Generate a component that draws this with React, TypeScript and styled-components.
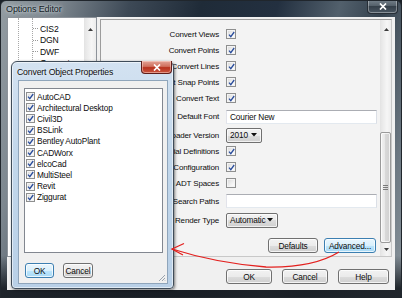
import React from "react";
import styled, { createGlobalStyle } from "styled-components";

const GlobalStyle = createGlobalStyle`
  html, body { margin: 0; padding: 0; background: #1b2128; }
  body { width: 402px; height: 298px; overflow: hidden; }
  * { box-sizing: border-box; }
`;

const Window = styled.div`
  position: relative;
  width: 402px;
  height: 298px;
  display: flex;
  flex-direction: column;
  border: 1px solid #20262c;
  border-radius: 6px 6px 0 0;
  background:
    linear-gradient(180deg, rgba(0,0,0,0) 0%, rgba(0,0,0,0) 86%, rgba(24,29,35,0.92) 97%),
    linear-gradient(105deg, #939ca2 0%, #7d878f 12%, #3d4956 27%, #1f2b38 42%, #233040 58%, #52606c 71%, #34414d 80%, #6e7a84 92%, #8b959c 100%);
  overflow: hidden;
  font-family: "Liberation Sans", Arial, sans-serif;
  font-size: 8px;
  letter-spacing: -0.15px;
  color: #0c0c0c;
`;

const TitleBar = styled.div`
  height: 16px;
  display: flex;
  justify-content: space-between;
  align-items: flex-start;
`;

const Title = styled.div`
  padding: 3px 0 0 5px;
  font-size: 9px;
  line-height: 10px;
  letter-spacing: -0.1px;
  color: #131c25;
  text-shadow: 0 0 3px rgba(225, 232, 238, 0.95), 0 0 6px rgba(225, 232, 238, 0.7);
`;

const WinClose = styled.div`
  width: 31px;
  height: 14px;
  margin: -1px 3px 0 0;
  border: 1px solid #262e36;
  border-top: none;
  border-radius: 0 0 4px 4px;
  background: linear-gradient(180deg, #75818b 0%, #505c66 50%, #35404a 50%, #4a5661 100%);
  box-shadow: inset 0 0 0 1px rgba(255, 255, 255, 0.35);
  display: flex;
  align-items: center;
  justify-content: center;
`;

const Client = styled.div`
  flex: 1;
  margin: 0 6px 7px 6px;
  background: #f0f0f0;
  display: flex;
  flex-direction: column;
`;

const TopRow = styled.div`
  display: flex;
  gap: 3px;
  height: 240px;
`;

const TreeBox = styled.div`
  width: 90px;
  height: 240px;
  background: #fff;
  border: 1px solid #8d939a;
  display: flex;
`;

const TreeContent = styled.div`
  flex: 1;
  padding-left: 10px;
`;

const OuterGuide = styled.div`
  height: 100%;
  border-left: 1px dotted #a8a8a8;
  padding-left: 13px;
`;

const InnerGuide = styled.div`
  height: 100%;
  border-left: 1px dotted #a8a8a8;
  padding-top: 5px;
`;

const TreeItem = styled.div`
  height: 11.5px;
  display: flex;
  align-items: center;
  font-size: 8.6px;
  &::before {
    content: "";
    width: 5px;
    margin-right: 2px;
    border-top: 1px dotted #999;
  }
`;

const VScroll = styled.div<{ $w: number }>`
  width: ${(p) => p.$w}px;
  display: flex;
  flex-direction: column;
  background: linear-gradient(90deg, #e6e6e6, #f6f6f6 60%, #ececec);
  border-left: 1px solid #e4e4e4;
`;

const ArrowBox = styled.div<{ $h: number }>`
  height: ${(p) => p.$h}px;
  flex: none;
  display: flex;
  align-items: center;
  justify-content: center;
`;

const Spacer = styled.div<{ $h: number }>`
  height: ${(p) => p.$h}px;
  flex: none;
`;

const Thumb = styled.div<{ $h: number }>`
  height: ${(p) => p.$h}px;
  flex: none;
  margin: 0 0 0 -1px;
  border: 1px solid #9a9a9a;
  border-radius: 2px;
  background: linear-gradient(90deg, #f2f2f2, #e6e6e6 50%, #d8d8d8 50%, #d0d0d0);
  box-shadow: inset 0 0 0 1px rgba(255, 255, 255, 0.7);
  display: flex;
  align-items: center;
  justify-content: center;
`;

const RightPanel = styled.div`
  margin-top: 2px;
  width: 292px;
  height: 238px;
  border: 1px solid #9c9c9c;
  border-right-color: #c8c8c8;
  border-bottom-color: #c8c8c8;
  background: #f3f3f3;
  display: flex;
`;

const FormArea = styled.div`
  flex: 1;
  display: flex;
  flex-direction: column;
  padding: 6px 3px 3px 0;
`;

const FormGrid = styled.div`
  display: grid;
  grid-template-columns: 118px 151px;
  grid-template-rows: 16px 16px 16px 16px 16px 21px 16px 16px 16px 16px 20px 18px;
  column-gap: 7px;
  align-items: center;
`;

const Label = styled.div`
  display: flex;
  justify-content: flex-end;
  white-space: nowrap;
  font-size: 8px;
`;

const Cell = styled.div`
  display: flex;
  align-items: center;
`;

const CheckBox = styled.div<{ $size: number }>`
  width: ${(p) => p.$size}px;
  height: ${(p) => p.$size}px;
  border: 1px solid #8e8f8f;
  background: linear-gradient(135deg, #d8d8d8, #f6f6f6 70%, #ffffff);
  box-shadow: inset 0 0 0 1px #f4f4f4;
  display: flex;
  align-items: center;
  justify-content: center;
  flex: none;
`;

const TextInput = styled.div`
  width: 151px;
  height: 14px;
  border: 1px solid;
  border-color: #abadb3 #dbdfe6 #e3e9ef #e2e3ea;
  background: #fff;
  padding-left: 3px;
  display: flex;
  align-items: center;
  font-size: 8.3px;
`;

const SelectBox = styled.div<{ $w: number }>`
  width: ${(p) => p.$w}px;
  height: 15px;
  border: 1px solid #707070;
  border-radius: 2px;
  background: linear-gradient(180deg, #f2f2f2 0%, #ebebeb 50%, #dddddd 50%, #cfcfcf 100%);
  box-shadow: inset 0 0 0 1px rgba(255, 255, 255, 0.7);
  display: flex;
  align-items: center;
  justify-content: space-between;
  padding: 0 4px 0 3px;
  font-size: 8.3px;
`;

const PanelButtons = styled.div`
  margin-top: auto;
  display: flex;
  justify-content: flex-end;
  gap: 6px;
  padding-right: 1px;
`;

const Button = styled.div<{ $w: number; $def?: boolean }>`
  width: ${(p) => p.$w}px;
  height: 15px;
  border: 1px solid ${(p) => (p.$def ? "#3c7fb1" : "#707070")};
  border-radius: 3px;
  background: ${(p) =>
    p.$def
      ? "linear-gradient(180deg, #eaf6fd 0%, #d9f0fc 50%, #bee6fd 50%, #a7d9f5 100%)"
      : "linear-gradient(180deg, #f2f2f2 0%, #ebebeb 50%, #dddddd 50%, #cfcfcf 100%)"};
  box-shadow: inset 0 0 0 1px rgba(255, 255, 255, 0.75);
  display: flex;
  align-items: center;
  justify-content: center;
  font-size: 8.3px;
  flex: none;
`;

const BottomRow = styled.div`
  display: flex;
  justify-content: flex-end;
  gap: 10px;
  padding-right: 6px;
  margin-top: 12px;
`;

const Dialog = styled.div`
  position: absolute;
  left: 10px;
  top: 60px;
  width: 163px;
  height: 228px;
  border: 1px solid #3f4c59;
  border-radius: 6px 6px 4px 4px;
  background: linear-gradient(180deg, #d3e2f1 0%, #c2d7eb 40%, #b9d0e7 100%);
  box-shadow: 1px 1px 3px rgba(0, 0, 0, 0.5), inset 0 0 0 1px rgba(255, 255, 255, 0.55);
  display: flex;
  flex-direction: column;
`;

const DialogTitleBar = styled.div`
  height: 18px;
  display: flex;
  justify-content: space-between;
  align-items: flex-start;
  flex: none;
`;

const DialogTitle = styled.div`
  padding: 5px 0 0 5px;
  line-height: 10px;
  font-size: 8.7px;
  color: #0c0c0c;
  text-shadow: 0 0 3px rgba(255, 255, 255, 0.8);
`;

const DialogClose = styled.div`
  width: 31px;
  height: 13px;
  margin: -1px 1px 0 0;
  border: 1px solid #5e1d1a;
  border-top: none;
  border-radius: 0 0 4px 4px;
  background: linear-gradient(180deg, #e3a497 0%, #d0705e 45%, #b8331f 55%, #c9553f 100%);
  box-shadow: inset 0 0 0 1px rgba(255, 220, 210, 0.5);
  display: flex;
  align-items: center;
  justify-content: center;
`;

const DialogClient = styled.div`
  position: relative;
  flex: 1;
  margin: 0 5px 4px 6px;
  border: 1px solid #8fa5bb;
  background: #f0f0f0;
  padding: 7px 4px 0 5px;
  display: flex;
  flex-direction: column;
`;

const ListBox = styled.div`
  width: 139px;
  height: 165px;
  border: 1px solid #828790;
  background: #fff;
  padding: 2px 0 0 1px;
  flex: none;
`;

const ListItem = styled.div`
  height: 11.2px;
  display: flex;
  align-items: center;
  gap: 2px;
  font-size: 8.3px;
`;

const DialogButtons = styled.div`
  display: flex;
  gap: 9px;
  margin-top: 10px;
  padding-left: 1px;
`;

const Grip = styled.svg`
  position: absolute;
  right: 1px;
  bottom: 1px;
`;

const Overlay = styled.svg`
  position: absolute;
  left: 0;
  top: 0;
  pointer-events: none;
`;

const Tick = () => (
  <svg width="7" height="7" viewBox="0 0 7 7">
    <path d="M1 3.6 L2.8 5.6 L6.2 1" fill="none" stroke="#2a4d9c" strokeWidth="1.3" />
  </svg>
);

const Check = ({ checked, size }: { checked: boolean; size: number }) => (
  <CheckBox $size={size}>{checked && <Tick />}</CheckBox>
);

const Caret = () => (
  <svg width="6" height="4" viewBox="0 0 6 4">
    <path d="M0 0 H6 L3 3.5 Z" fill="#111" />
  </svg>
);

const ScrollArrow = ({ up }: { up: boolean }) => (
  <svg width="5" height="3" viewBox="0 0 5 3">
    <path d={up ? "M0 3 L2.5 0 L5 3 Z" : "M0 0 L5 0 L2.5 3 Z"} fill="#3c3c3c" />
  </svg>
);

const XMark = ({ w }: { w: number }) => (
  <svg width={w} height={w - 1} viewBox="0 0 8 7">
    <path d="M1 0.5 L7 6.5 M7 0.5 L1 6.5" stroke="#fff" strokeWidth="1.7" />
  </svg>
);

type Row =
  | { kind: "check"; label: string; checked: boolean }
  | { kind: "input"; label: string; value: string }
  | { kind: "select"; label: string; value: string; w: number };

const rows: Row[] = [
  { kind: "check", label: "Convert Views", checked: true },
  { kind: "check", label: "Convert Points", checked: true },
  { kind: "check", label: "Convert Lines", checked: true },
  { kind: "check", label: "Insert Snap Points", checked: true },
  { kind: "check", label: "Convert Text", checked: true },
  { kind: "input", label: "Default Font", value: "Courier New" },
  { kind: "select", label: "Loader Version", value: "2010", w: 36 },
  { kind: "check", label: "Use Material Definitions", checked: true },
  { kind: "check", label: "Load Configuration", checked: true },
  { kind: "check", label: "Skip Objects in ADT Spaces", checked: false },
  { kind: "input", label: "Reference Search Paths", value: "" },
  { kind: "select", label: "Render Type", value: "Automatic", w: 52 },
];

const products = [
  "AutoCAD",
  "Architectural Desktop",
  "Civil3D",
  "BSLink",
  "Bentley AutoPlant",
  "CADWorx",
  "elcoCad",
  "MultiSteel",
  "Revit",
  "Ziggurat",
];

export default function App() {
  return (
    <>
      <GlobalStyle />
      <Window>
        <TitleBar>
          <Title>Options Editor</Title>
          <WinClose>
            <XMark w={8} />
          </WinClose>
        </TitleBar>
        <Client>
          <TopRow>
            <TreeBox>
              <TreeContent>
                <OuterGuide>
                  <InnerGuide>
                    <TreeItem>CIS2</TreeItem>
                    <TreeItem>DGN</TreeItem>
                    <TreeItem>DWF</TreeItem>
                    <TreeItem>Geometry</TreeItem>
                  </InnerGuide>
                </OuterGuide>
              </TreeContent>
              <VScroll $w={12}>
                <ArrowBox $h={22}>
                  <ScrollArrow up />
                </ArrowBox>
              </VScroll>
            </TreeBox>
            <RightPanel>
              <FormArea>
                <FormGrid>
                  {rows.map((r) => (
                    <React.Fragment key={r.label}>
                      <Label>{r.label}</Label>
                      <Cell>
                        {r.kind === "check" && <Check checked={r.checked} size={10} />}
                        {r.kind === "input" && <TextInput>{r.value}</TextInput>}
                        {r.kind === "select" && (
                          <SelectBox $w={r.w}>
                            <span>{r.value}</span>
                            <Caret />
                          </SelectBox>
                        )}
                      </Cell>
                    </React.Fragment>
                  ))}
                </FormGrid>
                <PanelButtons>
                  <Button $w={50}>Defaults</Button>
                  <Button $w={52} $def>
                    Advanced...
                  </Button>
                </PanelButtons>
              </FormArea>
              <VScroll $w={11}>
                <ArrowBox $h={18}>
                  <ScrollArrow up />
                </ArrowBox>
                <Spacer $h={94} />
                <Thumb $h={111}>
                  <svg width="5" height="5" viewBox="0 0 5 5">
                    <path d="M0 0.5 H5 M0 2.5 H5 M0 4.5 H5" stroke="#6e6e6e" strokeWidth="0.9" />
                  </svg>
                </Thumb>
                <ArrowBox $h={13}>
                  <ScrollArrow up={false} />
                </ArrowBox>
              </VScroll>
            </RightPanel>
          </TopRow>
          <BottomRow>
            <Button $w={46}>OK</Button>
            <Button $w={46}>Cancel</Button>
            <Button $w={51}>Help</Button>
          </BottomRow>
        </Client>

        <Dialog>
          <DialogTitleBar>
            <DialogTitle>Convert Object Properties</DialogTitle>
            <DialogClose>
              <XMark w={8} />
            </DialogClose>
          </DialogTitleBar>
          <DialogClient>
            <ListBox>
              {products.map((p) => (
                <ListItem key={p}>
                  <Check checked size={9} />
                  <span>{p}</span>
                </ListItem>
              ))}
            </ListBox>
            <DialogButtons>
              <Button $w={29} $def>
                OK
              </Button>
              <Button $w={30}>Cancel</Button>
            </DialogButtons>
            <Grip width="8" height="8" viewBox="0 0 8 8">
              <path d="M7 1 L1 7 M7 4 L4 7 M7 6.5 L6.5 7" stroke="#9aa3ad" strokeWidth="1" />
            </Grip>
          </DialogClient>
        </Dialog>

        <Overlay width="402" height="298" viewBox="0 0 402 298">
          <path
            d="M171 248 Q215 262 265 266 Q312 267 338 251"
            fill="none"
            stroke="#e3211f"
            strokeWidth="1.3"
          />
          <path d="M183 242.5 L171 248 L182 254" fill="none" stroke="#e3211f" strokeWidth="1.3" />
        </Overlay>
      </Window>
    </>
  );
}
